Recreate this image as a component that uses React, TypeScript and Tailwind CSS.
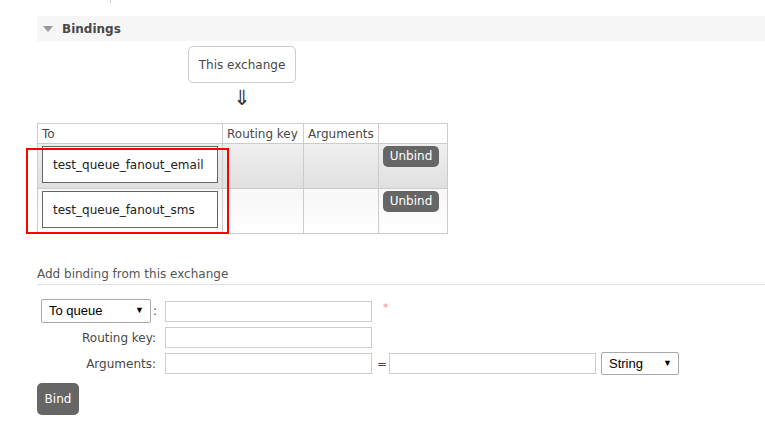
const rows = ["test_queue_fanout_email", "test_queue_fanout_sms"];

function Input({ w = "w-[207px]" }: { w?: string }) {
  return <div className={`${w} h-[21px] border border-[#ccc] bg-white`} />;
}

function Select({ label, w }: { label: string; w: string }) {
  return (
    <div
      className={`${w} flex items-center justify-between border border-[#a9a9a9] rounded-[2px] bg-white pl-[7px] pr-[6px] font-['Liberation_Sans',Arial,sans-serif] text-[13px] text-black`}
    >
      <span>{label}</span>
      <span className="text-[9px]">▼</span>
    </div>
  );
}

export default function App() {
  return (
    <div className="relative w-[765px] h-[427px] overflow-hidden bg-white font-['DejaVu_Sans',Verdana,sans-serif] text-[12px] text-[#484848]">
      <div className="ml-[110px] w-px h-[3px] bg-[#ccc]" />

      {/* section header */}
      <div className="ml-[37px] mt-[13px] h-[25px] bg-[#f6f6f6] flex items-center">
        <div className="ml-[6px] w-0 h-0 border-l-[5px] border-r-[5px] border-t-[6px] border-l-transparent border-r-transparent border-t-[#999]" />
        <span className="ml-[9px] font-bold text-[12px] text-[#484848]">Bindings</span>
      </div>

      <div className="ml-[188px] mt-[5px] w-[108px] h-[37px] border border-[#ccc] rounded-[5px] flex items-center justify-center">
        This exchange
      </div>
      <div className="ml-[233px] mt-[3px] h-[24px] leading-[24px] text-[21px] text-[#333]">⇓</div>

      {/* bindings table */}
      <table className="ml-[37px] mt-[13px] border-collapse">
        <thead>
          <tr className="h-[20px]">
            <th className="w-[185px] border border-[#ccc] px-[4px] text-left font-normal">To</th>
            <th className="w-[81px] border border-[#ccc] px-[4px] text-left font-normal">Routing key</th>
            <th className="w-[75px] border border-[#ccc] px-[4px] text-left font-normal">Arguments</th>
            <th className="w-[69px] border border-[#ccc]" />
          </tr>
        </thead>
        <tbody>
          {rows.map((q, i) => (
            <tr
              key={q}
              className={
                i === 0
                  ? "h-[45px] bg-linear-to-b from-[#efefef] to-[#e0e0e0]"
                  : "h-[45px] bg-linear-to-b from-[#f7f7f7] to-[#ffffff]"
              }
            >
              <td className="border border-[#ccc] px-[4px] align-top pt-[2px]">
                <div className="w-[176px] h-[37px] border border-[#666] bg-white flex items-center pl-[10px] text-[#222]">
                  {q}
                </div>
              </td>
              <td className="border border-[#ccc]" />
              <td className="border border-[#ccc]" />
              <td className="border border-[#ccc] align-top pt-[2px] pl-[4px]">
                <button className="w-[56px] h-[21px] rounded-[5px] bg-[#666] text-white text-[12px] leading-[21px]">
                  Unbind
                </button>
              </td>
            </tr>
          ))}
        </tbody>
      </table>

      {/* add binding */}
      <div className="ml-[37px] mt-[31px] pb-px border-b border-[#e2e2e2] text-[12px] text-[#555]">
        Add binding from this exchange
      </div>

      <div className="ml-[37px] mt-[14px] flex flex-col gap-[4px]">
        <div className="flex items-center h-[24px]">
          <div className="w-[128px] flex items-center pl-[4px]">
            <Select label="To queue" w="w-[110px] h-[24px]" />
            <span className="ml-[2px]">:</span>
          </div>
          <Input />
          <span className="ml-[11px] mb-[6px] text-[11px] text-[#f88]">*</span>
        </div>
        <div className="flex items-center h-[21px]">
          <div className="w-[128px] pr-[9px] text-right">Routing key:</div>
          <Input />
        </div>
        <div className="flex items-center h-[23px]">
          <div className="w-[128px] pr-[9px] text-right">Arguments:</div>
          <Input />
          <span className="ml-[5px] w-[12px]">=</span>
          <Input />
          <div className="ml-[5px]">
            <Select label="String" w="w-[78px] h-[23px]" />
          </div>
        </div>
      </div>

      <button className="ml-[37px] mt-[8px] w-[42px] h-[32px] rounded-[5px] bg-[#666] text-white text-[12px]">
        Bind
      </button>

      {/* annotation */}
      <div className="absolute left-[26px] top-[148px] w-[203px] h-[86px] border-2 border-[#f00]" />
    </div>
  );
}
